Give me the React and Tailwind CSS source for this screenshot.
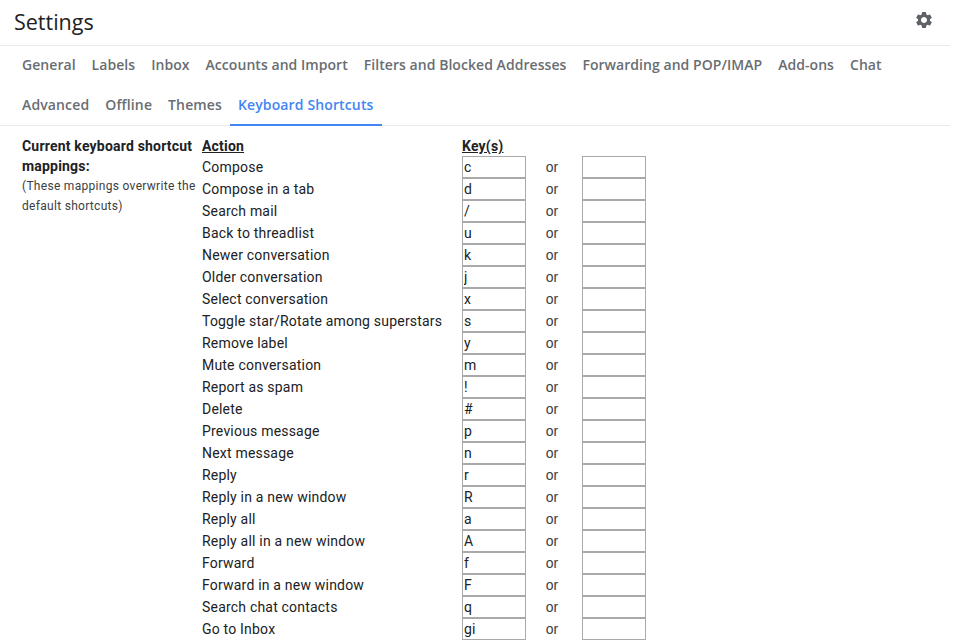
import React from "react";
import { MdSettings } from "react-icons/md";

const row1 = ["General", "Labels", "Inbox", "Accounts and Import", "Filters and Blocked Addresses", "Forwarding and POP/IMAP", "Add-ons", "Chat"];
const row2 = ["Advanced", "Offline", "Themes", "Keyboard Shortcuts"];
const rows = [
  ["Compose", "c"], ["Compose in a tab", "d"], ["Search mail", "/"], ["Back to threadlist", "u"],
  ["Newer conversation", "k"], ["Older conversation", "j"], ["Select conversation", "x"],
  ["Toggle star/Rotate among superstars", "s"], ["Remove label", "y"], ["Mute conversation", "m"],
  ["Report as spam", "!"], ["Delete", "#"], ["Previous message", "p"], ["Next message", "n"],
  ["Reply", "r"], ["Reply in a new window", "R"], ["Reply all", "a"], ["Reply all in a new window", "A"],
  ["Forward", "f"], ["Forward in a new window", "F"], ["Search chat contacts", "q"], ["Go to Inbox", "gi"],
];

function Tab({ label }) {
  const active = label === "Keyboard Shortcuts";
  return (
    <div className={`h-10 px-2 pb-[2px] flex items-center border-b-2 font-['Open_Sans',sans-serif] text-[14px] font-semibold ${active ? "border-[#4285f4] text-[#4285f4]" : "border-transparent text-[#696d72]"}`}>
      {label}
    </div>
  );
}

export default function App() {
  return (
    <div className="w-[950px] h-[640px] overflow-hidden bg-white text-[#202124] font-['Roboto',sans-serif] text-[14px] tracking-[0.2px]">
      <header className="h-[46px] border-b border-[#e8eaed] pl-[14px] pr-[16px] flex items-center justify-between">
        <h1 className="text-[21.5px] font-normal leading-none -mt-[2px] font-['Open_Sans','Roboto',sans-serif] tracking-normal text-[#202124]">Settings</h1>
        <MdSettings className="w-5 h-5 text-[#5f6368] -mt-[6px]" />
      </header>
      <nav className="h-[80px] border-b border-[#e8eaed] pl-[14px]">
        <div className="flex h-10 tracking-[0.05px]">{row1.map((t) => <Tab key={t} label={t} />)}</div>
        <div className="flex h-10 tracking-[0.13px]">{row2.map((t) => <Tab key={t} label={t} />)}</div>
      </nav>
      <main className="flex pl-[22px] pt-[10px]">
        <div className="w-[180px] shrink-0">
          <div className="font-bold leading-[20px]">Current keyboard shortcut mappings:</div>
          <div className="text-[12px] leading-[20px] tracking-[0.3px] text-[#3c4043] whitespace-nowrap">(These mappings overwrite the<br />default shortcuts)</div>
        </div>
        <div>
          <div className="flex h-[20px] leading-[20px] font-bold">
            <div className="w-[260px]"><span className="underline">Action</span></div>
            <div><span className="underline">Key(s)</span></div>
          </div>
          {rows.map(([action, key]) => (
            <div key={action} className="flex h-[22px] items-center">
              <div className="w-[260px] whitespace-nowrap leading-[22px]">{action}</div>
              <input readOnly value={key} className="w-[64px] h-[22px] border border-[#a9a9a9] px-[1px] text-[14px] text-[#202124] outline-none" />
              <div className="w-[56px] pr-[4px] text-center font-['Liberation_Sans',sans-serif] tracking-normal text-[14px] text-[#3c4043]">or</div>
              <input readOnly value="" className="w-[64px] h-[22px] border border-[#a9a9a9] px-[1px] outline-none" />
            </div>
          ))}
        </div>
      </main>
    </div>
  );
}
